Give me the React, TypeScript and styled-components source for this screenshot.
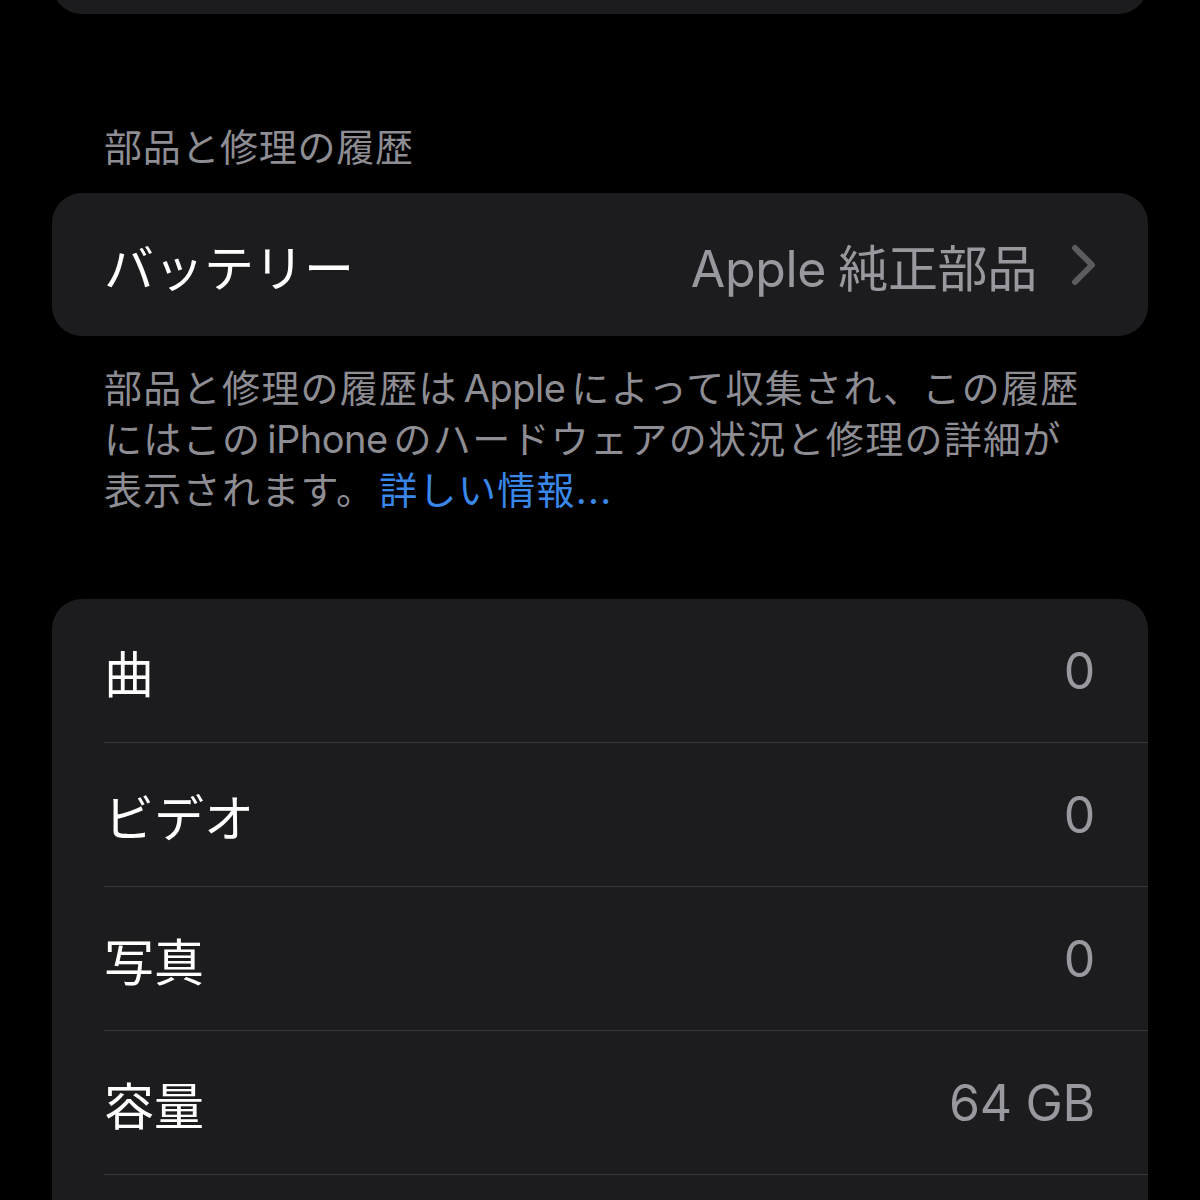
import React from 'react'
import styled, { createGlobalStyle } from 'styled-components'

const FONT = `Inter, "Noto Sans CJK JP", "Noto Sans", sans-serif`

const GlobalStyle = createGlobalStyle`
  html, body {
    margin: 0;
    padding: 0;
    background: #000;
  }
  body {
    font-family: ${FONT};
    -webkit-font-smoothing: antialiased;
  }
`

interface StatRow {
  label: string
  value: string
}

// the last row is only peeking in at the bottom edge
const STATS: StatRow[] = [
  { label: '曲', value: '0' },
  { label: 'ビデオ', value: '0' },
  { label: '写真', value: '0' },
  { label: '容量', value: '64 GB' },
  { label: '', value: '' },
]

export default function App() {
  return (
    <>
      <GlobalStyle />
      <Page>
        <TopCard />

        <SectionHeader>部品と修理の履歴</SectionHeader>
        <Card>
          <Row $first>
            <Label>バッテリー</Label>
            <ValueGroup>
              <Value>
                Apple<Latin />純正部品
              </Value>
              <Chevron />
            </ValueGroup>
          </Row>
        </Card>
        <SectionFooter>
          部品と修理の履歴は<Latin>Apple</Latin>によって収集され、この履歴
          <br />
          にはこの<Latin>iPhone</Latin>のハードウェアの状況と修理の詳細が
          <br />
          表示されます。<Link>詳しい情報...</Link>
        </SectionFooter>

        <StatsCard>
          {STATS.map((s, i) => (
            <Row key={i} $first={i === 0}>
              <Label>{s.label}</Label>
              <Value>{s.value}</Value>
            </Row>
          ))}
        </StatsCard>
      </Page>
    </>
  )
}

function Chevron() {
  return (
    <ChevronSvg width="26" height="44" viewBox="0 0 26 44" fill="none">
      <path d="M4 5 L21 22 L4 39" stroke="#5b5b60" strokeWidth="6" strokeLinecap="round" strokeLinejoin="round" />
    </ChevronSvg>
  )
}

const Page = styled.div`
  width: 1200px;
  height: 1200px;
  overflow: hidden;
  box-sizing: border-box;
  padding: 0 52px;
  display: flex;
  flex-direction: column;
`

const TopCard = styled.div`
  flex: none;
  height: 74px;
  margin-top: -60px;
  background: #1c1c1e;
  border-radius: 30px;
`

const SectionHeader = styled.div`
  margin: 110px 0 0;
  padding: 0 52px;
  font-size: 38px;
  line-height: 46px;
  color: #8d8d93;
  font-weight: 400;
  letter-spacing: 0.7px;
`

const Card = styled.div`
  flex: none;
  margin-top: 23px;
  background: #1c1c1e;
  border-radius: 30px;
  overflow: hidden;
`

const StatsCard = styled(Card)`
  margin-top: 83px;
`

const Row = styled.div<{ $first?: boolean }>`
  flex: none;
  height: 143px;
  margin-left: 52px;
  padding-right: 53px;
  display: flex;
  align-items: center;
  justify-content: space-between;
  border-top: ${(p) => (p.$first ? 'none' : '1px solid #38383a')};
`

const Label = styled.span`
  font-size: 50px;
  color: #fff;
  font-weight: 400;
`

const ValueGroup = styled.div`
  display: flex;
  align-items: center;
  gap: 34px;
`

const Value = styled.span`
  font-size: 50px;
  color: #98989f;
  font-weight: 400;
  letter-spacing: -0.3px;
`

const ChevronSvg = styled.svg`
  display: block;
  margin-right: -2px;
`

const SectionFooter = styled.div`
  margin-top: 27px;
  padding: 0 52px;
  font-size: 38px;
  line-height: 51px;
  color: #8d8d93;
  white-space: nowrap;
  letter-spacing: 1.3px;
`

const Latin = styled.span`
  margin: 0 6px;
  letter-spacing: -0.5px;
`

const Link = styled.span`
  color: #3a87ea;
  margin-left: 4px;
`
